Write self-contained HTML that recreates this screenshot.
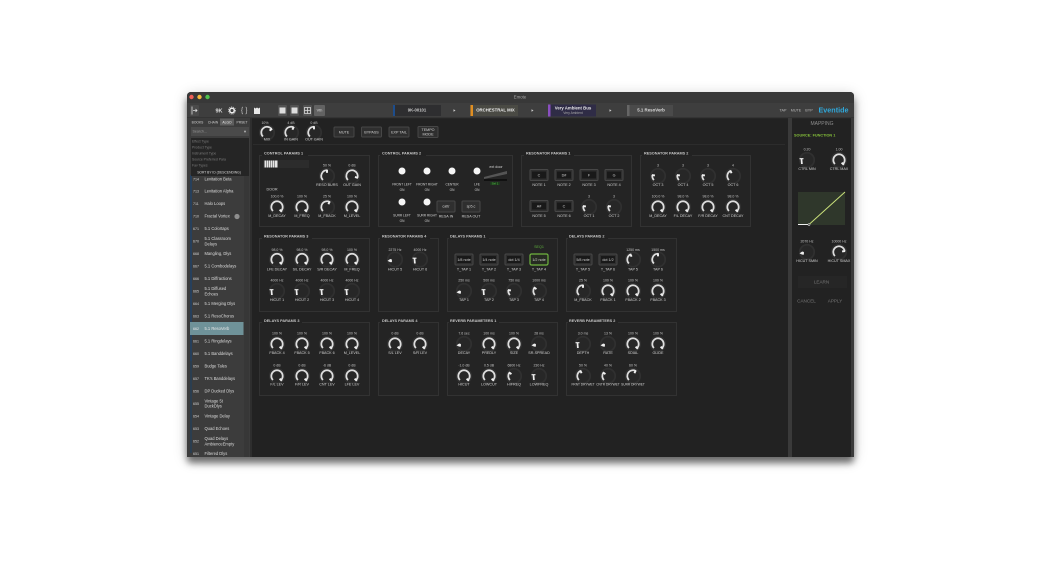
<!DOCTYPE html>
<html><head><meta charset="utf-8"><style>
html,body{margin:0;padding:0;background:#fff;width:1044px;height:566px;overflow:hidden}
svg{display:block;position:absolute;left:0;top:0;filter:blur(.32px);font-family:"Liberation Sans",sans-serif}
#win{position:absolute;left:187px;top:92px;width:667px;height:365px;border-radius:4px;background:#222;box-shadow:0 6px 7px rgba(0,0,0,.5),0 3px 14px rgba(0,0,0,.22)}
text{font-size:3.7px;fill:#d2d2d2;text-anchor:middle}
.v{font-size:3.5px;fill:#c0c0c0}
.t{font-size:3.8px;fill:#c8c8c8;text-anchor:start;font-weight:bold}
.s{text-anchor:start;font-size:4.1px;fill:#dcdcdc}
.n{text-anchor:start;font-size:3.6px;fill:#d2d2d2}
.p{fill:#242424;stroke:#323232;stroke-width:1}
.b{fill:#2f2f2f;stroke:#474747;stroke-width:1}
.d{fill:#191919}
.a{fill:none;stroke:#dedede;stroke-width:2}
.m{stroke:#f0f0f0;stroke-width:2.2}
.x{font-size:3.2px}
</style></head><body>
<div id="win"></div>
<svg width="1044" height="566" viewBox="0 0 1044 566" xmlns="http://www.w3.org/2000/svg">
<defs>
<circle id="bg" r="8.2" fill="#272727" stroke="#303030" stroke-width="2"/>
<g id="f0" transform="scale(.88)"><use href="#bg"/><path d="M-8.500 1.500L-5.500 -.5L-3.500 0V3L-5.500 3z" fill="#eee"/></g>
<g id="f1" transform="scale(.88)"><use href="#bg"/><path d="M-8.500 -2.200H-4V-.9H-5.300L-4.800 4.500H-6.800L-7.200 -.9H-8.500z" fill="#eee"/></g>
<g id="f2" transform="scale(.88)"><use href="#bg"/><path class="a" d="M-4.600 4.600A6.500 6.500 0 0 1 -6.420 -1.020"/><line class="m" x1="-3.500" y1="-.6" x2="-7" y2="-1.100"/></g>
<g id="f3" transform="scale(.88)"><use href="#bg"/><path class="a" d="M-4.600 4.600A6.500 6.500 0 0 1 -5.260 -3.820"/><line class="m" x1="-2.900" y1="-2.100" x2="-5.800" y2="-4.200"/></g>
<g id="f4" transform="scale(.88)"><use href="#bg"/><path class="a" d="M-4.600 4.600A6.500 6.500 0 0 1 -2.950 -5.790"/><line class="m" x1="-1.600" y1="-3.200" x2="-3.200" y2="-6.400"/></g>
<g id="f5" transform="scale(.88)"><use href="#bg"/><path class="a" d="M-4.600 4.600A6.500 6.500 0 0 1 0 -6.500"/><line class="m" x1="0" y1="-3.600" x2="0" y2="-7.200"/></g>
<g id="f6" transform="scale(.88)"><use href="#bg"/><path class="a" d="M-4.600 4.600A6.500 6.500 0 0 1 2.950 -5.790"/><line class="m" x1="1.600" y1="-3.200" x2="3.200" y2="-6.400"/></g>
<g id="f7" transform="scale(.88)"><use href="#bg"/><path class="a" d="M-4.600 4.600A6.500 6.500 0 1 1 5.260 -3.820"/><line class="m" x1="2.900" y1="-2.100" x2="5.800" y2="-4.200"/></g>
<g id="f8" transform="scale(.88)"><use href="#bg"/><path class="a" d="M-4.600 4.600A6.500 6.500 0 1 1 6.420 -1.020"/><line class="m" x1="3.500" y1="-.6" x2="7" y2="-1.100"/></g>
<g id="f9" transform="scale(.88)"><use href="#bg"/><path class="a" d="M-4.600 4.600A6.500 6.500 0 1 1 6.180 2.010"/><line class="m" x1="3.400" y1="1.100" x2="6.800" y2="2.200"/></g>
<g id="fa" transform="scale(.88)"><use href="#bg"/><path class="a" d="M-4.600 4.600A6.500 6.500 0 1 1 4.600 4.600"/><line class="m" x1="3" y1="3" x2="5.500" y2="5.500"/></g>
</defs>

<!-- window chrome -->
<rect x="187" y="92" width="667" height="11" rx="4" fill="#383838"/>
<rect x="187" y="98" width="667" height="5" fill="#383838"/>
<rect x="187" y="103" width="667" height="15" fill="#3e3e3e"/>
<rect x="187" y="117.500" width="667" height="1" fill="#2a2a2a"/>
<circle cx="191.500" cy="97" r="2.200" fill="#ee5f57"/><circle cx="199.500" cy="97" r="2.200" fill="#f5b93c"/><circle cx="207.500" cy="97" r="2.200" fill="#4fc24c"/>
<text x="520" y="98.500" style="font-size:4.400px;fill:#a8a8a8">Emote</text>

<!-- toolbar icons -->
<rect x="190" y="105" width="9" height="11" rx="1" fill="#4a4a4a"/>
<path d="M192 106.500v8M193 110.500h4M195.500 109l1.500 1.500-1.500 1.500" stroke="#ddd" stroke-width=".8" fill="none"/>
<text x="219" y="112.500" style="font-size:5.500px;font-weight:bold;fill:#ddd">9K</text>
<circle cx="232" cy="110.500" r="2.300" fill="none" stroke="#eee" stroke-width="1.500"/><circle cx="232" cy="110.500" r="3.600" fill="none" stroke="#ddd" stroke-width=".8" stroke-dasharray="1 1"/>
<path d="M243 107c-1 0-1 .6-1 1.500v1c0 .6-.3 1-.7 1 .4 0 .7.4.7 1v1c0 .9 0 1.500 1 1.500M245.500 107c1 0 1 .6 1 1.500v1c0 .6.3 1 .7 1-.4 0-.7.4-.7 1v1c0 .9 0 1.500-1 1.500" fill="none" stroke="#ccc" stroke-width=".6"/>
<path d="M254 107.500l1.500 1 1.500-1 1.500 1 1.500-1v6.500h-6z" fill="#e8e8e8"/>
<rect x="278" y="105" width="9" height="11" rx="1" fill="#525252"/><rect x="279.500" y="107.500" width="6" height="6" fill="#ddd"/>
<rect x="290" y="105" width="9" height="11" rx="1" fill="#525252"/><rect x="291.500" y="107.500" width="6" height="6" fill="#ddd"/>
<rect x="303" y="105" width="9" height="11" rx="1" fill="#525252"/><path d="M304.500 107.500h6v6h-6zM307.500 107.500v6M304.500 110.500h6" fill="none" stroke="#ddd" stroke-width=".8"/>
<rect x="314" y="105" width="11" height="11" rx="1" fill="#626262"/><text x="319.500" y="111.500" style="font-size:3.800px;fill:#ddd">Vth</text>

<!-- preset slots -->
<rect x="393" y="105" width="48" height="11" fill="#2e2e30"/><rect x="393" y="105" width="2" height="11" fill="#1d4d8c"/>
<text x="417" y="111.700" style="font-size:4.200px;font-weight:bold;fill:#ccc">9K-00101</text>
<path d="M453.500 109.300l2 1.200-2 1.200z" fill="#ccc"/>
<rect x="470" y="105" width="48" height="11" fill="#4a4a44"/><rect x="470.500" y="105" width="2.500" height="11" fill="#e08e22"/>
<text x="495.500" y="111.700" style="font-size:4.300px;font-weight:bold;fill:#efefef">ORCHESTRAL MIX</text>
<path d="M531.500 109.300l2 1.200-2 1.200z" fill="#ccc"/>
<rect x="548" y="104.500" width="48" height="12" fill="#2f2c46"/><rect x="548" y="104.500" width="2.500" height="12" fill="#8a4fc0"/>
<text x="573" y="109.700" style="font-size:4.300px;font-weight:bold;fill:#e8e8e8">Very Ambient Bus</text>
<text x="573" y="114.200" style="font-size:3.300px;fill:#aaa">Very Ambient</text>
<path d="M609.500 109.300l2 1.200-2 1.200z" fill="#ccc"/>
<rect x="627" y="105" width="46" height="11" fill="#4a4a4a"/><rect x="627" y="105" width="2.500" height="11" fill="#666"/>
<text x="651" y="111.700" style="font-size:4.400px;font-weight:bold;fill:#ddd">5.1 ResoVerb</text>
<text x="783" y="111.500" style="font-size:3.700px;fill:#bbb">TAP</text><text x="796" y="111.500" style="font-size:3.700px;fill:#bbb">MUTE</text><text x="809" y="111.500" style="font-size:3.700px;fill:#bbb">BYP</text>
<text x="833.500" y="112.500" style="font-size:7.200px;font-weight:bold;fill:#2fa9dc">Eventide</text>

<!-- sidebar -->
<rect x="187" y="118" width="64" height="339" fill="#3c3c3c"/>
<rect x="190" y="175" width="2" height="186" fill="#27405c"/>
<rect x="190" y="361" width="2" height="92" fill="#2b3e50"/>
<rect x="244" y="176" width="5" height="281" fill="#373737"/>
<rect x="250" y="118" width="2" height="339" fill="#2e2e2e"/>
<rect x="220" y="118.500" width="14" height="7" fill="#5e5e5e"/>
<text x="197.500" y="123.500" style="font-size:3.300px">BOOKS</text><text x="213" y="123.500" style="font-size:3.300px">CHAIN</text><text x="227" y="123.500" style="font-size:3.300px;fill:#eee">ALGO</text><text x="242" y="123.500" style="font-size:3.300px">PRSET</text>
<rect x="191" y="127" width="58" height="9" fill="#4a4a4a"/>
<text class="n" x="192.500" y="132.700" style="fill:#999">Search...</text>
<circle cx="245" cy="131.500" r="1" fill="#aaa"/>
<rect x="191" y="138" width="58" height="38" fill="#252525"/>
<text class="n" x="192" y="142.500" style="fill:#7c7c7c;font-size:3.400px">Effect Type</text>
<text class="n" x="192" y="148.500" style="fill:#7c7c7c;font-size:3.400px">Product Type</text>
<text class="n" x="192" y="154.500" style="fill:#7c7c7c;font-size:3.400px">Instrument Type</text>
<text class="n" x="192" y="160.500" style="fill:#7c7c7c;font-size:3.400px">Source Preferred Para</text>
<text class="n" x="192" y="166.500" style="fill:#7c7c7c;font-size:3.400px">Fav Types</text>
<text x="219" y="173.500" style="font-size:3.300px;fill:#ddd">SORT BY ID (DESCENDING)</text>
<rect x="190" y="322" width="53.500" height="13" fill="#6f9299"/>

<text class="n" x="193" y="180.500">714</text><text class="s" x="204.500" y="180.500">Levitation Beta</text>
<text class="n" x="193" y="192.500">713</text><text class="s" x="204.500" y="192.500">Levitation Alpha</text>
<text class="n" x="193" y="205">711</text><text class="s" x="204.500" y="205">Halo Loops</text>
<text class="n" x="193" y="217.500">710</text><text class="s" x="204.500" y="217.500">Fractal Vortex</text>
<circle cx="237" cy="216.500" r="2.600" fill="#8e8e8e"/>
<text class="n" x="193" y="230">671</text><text class="s" x="204.500" y="230">5.1 Colortaps</text>
<text class="n" x="193" y="242.500">670</text><text class="s" x="204.500" y="240">5.1 Classroom</text><text class="s" x="204.500" y="245.500">Delays</text>
<text class="n" x="193" y="255">668</text><text class="s" x="204.500" y="255">Mangling, Dlys</text>
<text class="n" x="193" y="267.500">667</text><text class="s" x="204.500" y="267.500">5.1 Combodelays</text>
<text class="n" x="193" y="280">666</text><text class="s" x="204.500" y="280">5.1 Diffractions</text>
<text class="n" x="193" y="292.500">665</text><text class="s" x="204.500" y="290">5.1 Diffused</text><text class="s" x="204.500" y="295.500">Echoes</text>
<text class="n" x="193" y="305">664</text><text class="s" x="204.500" y="305">5.1 Merging Dlys</text>
<text class="n" x="193" y="317.500">663</text><text class="s" x="204.500" y="317.500">5.1 ResoChorus</text>
<text class="n" x="193" y="330" style="fill:#e8e8e8">662</text><text class="s" x="204.500" y="330" style="fill:#e8e8e8">5.1 ResoVerb</text>
<text class="n" x="193" y="342.500">661</text><text class="s" x="204.500" y="342.500">5.1 Ringdelays</text>
<text class="n" x="193" y="355">660</text><text class="s" x="204.500" y="355">5.1 Banddelays</text>
<text class="n" x="193" y="367.500">659</text><text class="s" x="204.500" y="367.500">Budge Tales</text>
<text class="n" x="193" y="380">657</text><text class="s" x="204.500" y="380">TK's Banddelays</text>
<text class="n" x="193" y="392.500">656</text><text class="s" x="204.500" y="392.500">DP Ducked Dlys</text>
<text class="n" x="193" y="405">655</text><text class="s" x="204.500" y="402.500">Vintage 5t</text><text class="s" x="204.500" y="407.500">DuckDlys</text>
<text class="n" x="193" y="417.500">654</text><text class="s" x="204.500" y="417.500">Vintage Delay</text>
<text class="n" x="193" y="430">653</text><text class="s" x="204.500" y="430">Quad Echoes</text>
<text class="n" x="193" y="442.500">652</text><text class="s" x="204.500" y="440">Quad Delays</text><text class="s" x="204.500" y="445.500">AmbienceEmpty</text>
<text class="n" x="193" y="455">651</text><text class="s" x="204.500" y="455">Filtered Dlys</text>

<!-- dividers -->
<rect x="788" y="118" width="4" height="339" fill="#3a3a3a"/>
<rect x="851" y="118" width="3" height="339" fill="#3a3a3a"/>
<line x1="253" y1="144.500" x2="785" y2="144.500" stroke="#2c2c2c" stroke-width="1"/>

<!-- top controls -->
<use href="#f7" x="267" y="132.500"/><text class="v" x="265" y="124">10%</text><text x="267" y="140.500">MIX</text>
<use href="#f6" x="291" y="132.500"/><text class="v" x="291" y="124">4 dB</text><text x="291" y="140.500">IN GAIN</text>
<use href="#f5" x="314" y="132.500"/><text class="v" x="314" y="124">0 dB</text><text x="314" y="140.500">OUT GAIN</text>
<rect class="b" x="334" y="127" width="20" height="10" rx="1"/><text x="344" y="133.500">MUTE</text>
<rect class="b" x="361.500" y="127" width="20" height="10" rx="1"/><text x="371.500" y="133.500">BYPASS</text>
<rect class="b" x="389" y="127" width="20" height="10" rx="1"/><text x="399" y="133.500">EXP TAIL</text>
<rect class="b" x="418" y="126.500" width="20" height="11" rx="1"/><text x="428" y="131">TEMPO</text><text x="428" y="135.500">MODE</text>

<!-- panels -->
<rect class="p" x="259.500" y="155.500" width="110" height="71"/>
<rect class="p" x="378.500" y="155.500" width="134" height="71"/>
<rect class="p" x="521.500" y="155.500" width="110" height="71"/>
<rect class="p" x="640.500" y="155.500" width="110" height="71"/>
<rect class="p" x="259.500" y="238.500" width="110" height="73"/>
<rect class="p" x="378.500" y="238.500" width="60" height="73"/>
<rect class="p" x="447.500" y="238.500" width="110" height="73"/>
<rect class="p" x="566.500" y="238.500" width="110" height="73"/>
<rect class="p" x="259.500" y="322.500" width="110" height="73"/>
<rect class="p" x="378.500" y="322.500" width="60" height="73"/>
<rect class="p" x="447.500" y="322.500" width="110" height="73"/>
<rect class="p" x="566.500" y="322.500" width="110" height="73"/>

<rect x="262" y="152" width="46" height="4" fill="#222"/><text class="t" x="264" y="154.500">CONTROL PARAMS 1</text>
<rect x="380" y="152" width="46" height="4" fill="#222"/><text class="t" x="382" y="154.500">CONTROL PARAMS 2</text>
<rect x="524" y="152" width="50" height="4" fill="#222"/><text class="t" x="526" y="154.500">RESONATOR PARAMS 1</text>
<rect x="642" y="152" width="50" height="4" fill="#222"/><text class="t" x="644" y="154.500">RESONATOR PARAMS 2</text>
<rect x="262" y="235" width="50" height="4" fill="#222"/><text class="t" x="264" y="237.500">RESONATOR PARAMS 3</text>
<rect x="380" y="235" width="50" height="4" fill="#222"/><text class="t" x="382" y="237.500">RESONATOR PARAMS 4</text>
<rect x="449" y="235" width="40" height="4" fill="#222"/><text class="t" x="450" y="237.500">DELAYS PARAMS 1</text>
<rect x="568" y="235" width="40" height="4" fill="#222"/><text class="t" x="569" y="237.500">DELAYS PARAMS 2</text>
<rect x="262" y="319" width="40" height="4" fill="#222"/><text class="t" x="264" y="322">DELAYS PARAMS 3</text>
<rect x="380" y="319" width="40" height="4" fill="#222"/><text class="t" x="382" y="322">DELAYS PARAMS 4</text>
<rect x="449" y="319" width="50" height="4" fill="#222"/><text class="t" x="450" y="322">REVERB PARAMETERS 1</text>
<rect x="568" y="319" width="50" height="4" fill="#222"/><text class="t" x="569" y="322">REVERB PARAMETERS 2</text>

<!-- control params 1 -->
<rect x="263" y="160" width="46" height="8" fill="#2c2c2c"/>
<path d="M264.500 160.500h13v7h-13z" fill="#e6e6e6"/><path d="M266.500 160.500v7M268.500 160.500v7M270.500 160.500v7M272.500 160.500v7M274.500 160.500v7" stroke="#555" stroke-width=".6"/>
<text x="272" y="190.500">DOOR</text>
<use href="#f5" x="327" y="176"/><text class="v" x="327" y="166.500">50 %</text><text x="327" y="186">RESO BURS</text>
<use href="#f9" x="352" y="176"/><text class="v" x="352" y="166.500">0 dB</text><text x="352" y="186">OUT GAIN</text>
<use href="#fa" x="277" y="207"/><text class="v" x="277" y="197.500">100.0 %</text><text x="277" y="217">M_DECAY</text>
<use href="#fa" x="302" y="207"/><text class="v" x="302" y="197.500">100 %</text><text x="302" y="217">M_FREQ</text>
<use href="#f6" x="327" y="207"/><text class="v" x="327" y="197.500">25 %</text><text x="327" y="217">M_FBACK</text>
<use href="#fa" x="352" y="207"/><text class="v" x="352" y="197.500">100 %</text><text x="352" y="217">M_LEVEL</text>

<!-- control params 2 -->
<circle cx="402" cy="171" r="3.500" fill="#f5f5f5"/><circle cx="427" cy="171" r="3.500" fill="#f5f5f5"/><circle cx="452" cy="171" r="3.500" fill="#f5f5f5"/><circle cx="477" cy="171" r="3.500" fill="#f5f5f5"/>
<text class="x" x="402" y="185.500">FRONT LEFT</text><text class="x" x="402" y="191">ON</text>
<text class="x" x="427" y="185.500">FRONT RIGHT</text><text class="x" x="427" y="191">ON</text>
<text class="x" x="452" y="185.500">CENTER</text><text class="x" x="452" y="191">ON</text>
<text class="x" x="477" y="185.500">LFE</text><text class="x" x="477" y="191">ON</text>
<circle cx="402" cy="202" r="3.500" fill="#f5f5f5"/><circle cx="427" cy="202" r="3.500" fill="#f5f5f5"/>
<text class="x" x="402" y="216.500">SURR LEFT</text><text class="x" x="402" y="222">ON</text>
<text class="x" x="427" y="216.500">SURR RIGHT</text><text class="x" x="427" y="222">ON</text>
<rect class="b" x="437" y="201" width="18" height="11" rx="1"/><text x="446" y="207.500">cattr</text><text x="446" y="217.500">RESA IN</text>
<rect class="b" x="462" y="201" width="18" height="11" rx="1"/><text x="471" y="207.500">sp5.c</text><text x="471" y="217.500">RESA OUT</text>
<text x="496" y="168">ext door</text>
<path d="M484 177 L507 171 L507 174 L484 179z" fill="#555"/><rect x="484" y="179" width="23" height="2" fill="#111"/>
<rect x="490" y="182" width="10" height="3" fill="#1c3a1c"/><text x="495" y="184.500" style="fill:#5cc24a;font-size:3px">Sel 1</text>

<!-- resonator 1 -->
<rect class="b" x="530" y="169.500" width="18" height="11" rx="1"/><rect class="d" x="532" y="171.500" width="14" height="7"/><text x="539" y="176.500">C</text><text x="539" y="186">NOTE 1</text>
<rect class="b" x="555" y="169.500" width="18" height="11" rx="1"/><rect class="d" x="557" y="171.500" width="14" height="7"/><text x="564" y="176.500">D#</text><text x="564" y="186">NOTE 2</text>
<rect class="b" x="580" y="169.500" width="18" height="11" rx="1"/><rect class="d" x="582" y="171.500" width="14" height="7"/><text x="589" y="176.500">F</text><text x="589" y="186">NOTE 3</text>
<rect class="b" x="605" y="169.500" width="18" height="11" rx="1"/><rect class="d" x="607" y="171.500" width="14" height="7"/><text x="614" y="176.500">G</text><text x="614" y="186">NOTE 4</text>
<rect class="b" x="530" y="200.500" width="18" height="11" rx="1"/><rect class="d" x="532" y="202.500" width="14" height="7"/><text x="539" y="207.500">A#</text><text x="539" y="217">NOTE 5</text>
<rect class="b" x="555" y="200.500" width="18" height="11" rx="1"/><rect class="d" x="557" y="202.500" width="14" height="7"/><text x="564" y="207.500">C</text><text x="564" y="217">NOTE 6</text>
<use href="#f2" x="589" y="207"/><text class="v" x="589" y="197.500">3</text><text x="589" y="217">OCT 1</text>
<use href="#f2" x="614" y="207"/><text class="v" x="614" y="197.500">3</text><text x="614" y="217">OCT 2</text>

<!-- resonator 2 -->
<use href="#f2" x="658" y="176"/><text class="v" x="658" y="166.500">3</text><text x="658" y="186">OCT 3</text>
<use href="#f2" x="683" y="176"/><text class="v" x="683" y="166.500">3</text><text x="683" y="186">OCT 4</text>
<use href="#f2" x="708" y="176"/><text class="v" x="708" y="166.500">3</text><text x="708" y="186">OCT 5</text>
<use href="#f4" x="733" y="176"/><text class="v" x="733" y="166.500">4</text><text x="733" y="186">OCT 6</text>
<use href="#fa" x="658" y="207"/><text class="v" x="658" y="197.500">100.0 %</text><text x="658" y="217">M_DECAY</text>
<use href="#fa" x="683" y="207"/><text class="v" x="683" y="197.500">98.0 %</text><text x="683" y="217">F/L DECAY</text>
<use href="#fa" x="708" y="207"/><text class="v" x="708" y="197.500">98.0 %</text><text x="708" y="217">F/R DECAY</text>
<use href="#fa" x="733" y="207"/><text class="v" x="733" y="197.500">98.0 %</text><text x="733" y="217">CNT DECAY</text>

<!-- resonator 3 -->
<use href="#fa" x="277" y="259.500"/><text class="v" x="277" y="251">98.0 %</text><text x="277" y="270.300">LFE DECAY</text>
<use href="#fa" x="302" y="259.500"/><text class="v" x="302" y="251">98.0 %</text><text x="302" y="270.300">S/L DECAY</text>
<use href="#fa" x="327" y="259.500"/><text class="v" x="327" y="251">98.0 %</text><text x="327" y="270.300">S/R DECAY</text>
<use href="#fa" x="352" y="259.500"/><text class="v" x="352" y="251">100 %</text><text x="352" y="270.300">M_FREQ</text>
<use href="#f1" x="277" y="291"/><text class="v" x="277" y="281.500">4000 Hz</text><text x="277" y="301">HICUT 1</text>
<use href="#f1" x="302" y="291"/><text class="v" x="302" y="281.500">4000 Hz</text><text x="302" y="301">HICUT 2</text>
<use href="#f1" x="327" y="291"/><text class="v" x="327" y="281.500">4000 Hz</text><text x="327" y="301">HICUT 3</text>
<use href="#f1" x="352" y="291"/><text class="v" x="352" y="281.500">4000 Hz</text><text x="352" y="301">HICUT 4</text>

<!-- resonator 4 -->
<use href="#f0" x="395" y="259.500"/><text class="v" x="395" y="251">2275 Hz</text><text x="395" y="270.300">HICUT 5</text>
<use href="#f1" x="420" y="259.500"/><text class="v" x="420" y="251">4000 Hz</text><text x="420" y="270.300">HICUT 6</text>

<!-- delays 1 -->
<rect class="b" x="455" y="254" width="18" height="11" rx="1"/><rect class="d" x="457" y="256" width="14" height="7"/><text x="464" y="261">1/8 note</text><text x="464" y="270.300">T_TAP 1</text>
<rect class="b" x="480" y="254" width="18" height="11" rx="1"/><rect class="d" x="482" y="256" width="14" height="7"/><text x="489" y="261">1/4 note</text><text x="489" y="270.300">T_TAP 2</text>
<rect class="b" x="505" y="254" width="18" height="11" rx="1"/><rect class="d" x="507" y="256" width="14" height="7"/><text x="514" y="261">dot 1/4</text><text x="514" y="270.300">T_TAP 3</text>
<rect x="530" y="254" width="18" height="11" rx="1.500" stroke="#6fb33f" stroke-width="1.200" style="fill:#262b22"/><text x="539" y="261">1/2 note</text><text x="539" y="270.300">T_TAP 4</text>
<text x="539" y="248" style="fill:#5cae3c">SEQ1</text>
<use href="#f0" x="464" y="291"/><text class="v" x="464" y="281.500">250 ms</text><text x="464" y="301">TAP 1</text>
<use href="#f1" x="489" y="291"/><text class="v" x="489" y="281.500">500 ms</text><text x="489" y="301">TAP 2</text>
<use href="#f2" x="514" y="291"/><text class="v" x="514" y="281.500">750 ms</text><text x="514" y="301">TAP 3</text>
<use href="#f3" x="539" y="291"/><text class="v" x="539" y="281.500">1000 ms</text><text x="539" y="301">TAP 4</text>

<!-- delays 2 -->
<rect class="b" x="574" y="254" width="18" height="11" rx="1"/><rect class="d" x="576" y="256" width="14" height="7"/><text x="583" y="261">5/8 note</text><text x="583" y="270.300">T_TAP 5</text>
<rect class="b" x="599" y="254" width="18" height="11" rx="1"/><rect class="d" x="601" y="256" width="14" height="7"/><text x="608" y="261">dot 1/2</text><text x="608" y="270.300">T_TAP 6</text>
<use href="#f4" x="633" y="259.500"/><text class="v" x="633" y="251">1250 ms</text><text x="633" y="270.300">TAP 5</text>
<use href="#f5" x="658" y="259.500"/><text class="v" x="658" y="251">1500 ms</text><text x="658" y="270.300">TAP 6</text>
<use href="#f5" x="583" y="291"/><text class="v" x="583" y="281.500">25 %</text><text x="583" y="301">M_FBACK</text>
<use href="#fa" x="608" y="291"/><text class="v" x="608" y="281.500">100 %</text><text x="608" y="301">FBACK 1</text>
<use href="#fa" x="633" y="291"/><text class="v" x="633" y="281.500">100 %</text><text x="633" y="301">FBACK 2</text>
<use href="#fa" x="658" y="291"/><text class="v" x="658" y="281.500">100 %</text><text x="658" y="301">FBACK 3</text>

<!-- delays 3 -->
<use href="#fa" x="277" y="344"/><text class="v" x="277" y="334.500">100 %</text><text x="277" y="354">FBACK 4</text>
<use href="#fa" x="302" y="344"/><text class="v" x="302" y="334.500">100 %</text><text x="302" y="354">FBACK 5</text>
<use href="#fa" x="327" y="344"/><text class="v" x="327" y="334.500">100 %</text><text x="327" y="354">FBACK 6</text>
<use href="#fa" x="352" y="344"/><text class="v" x="352" y="334.500">100 %</text><text x="352" y="354">M_LEVEL</text>
<use href="#fa" x="277" y="376"/><text class="v" x="277" y="366.500">0 dB</text><text x="277" y="385.500">F/L LEV</text>
<use href="#fa" x="302" y="376"/><text class="v" x="302" y="366.500">0 dB</text><text x="302" y="385.500">F/R LEV</text>
<use href="#fa" x="327" y="376"/><text class="v" x="327" y="366.500">-6 dB</text><text x="327" y="385.500">CNT LEV</text>
<use href="#fa" x="352" y="376"/><text class="v" x="352" y="366.500">0 dB</text><text x="352" y="385.500">LFE LEV</text>

<!-- delays 4 -->
<use href="#fa" x="395" y="344"/><text class="v" x="395" y="334.500">0 dB</text><text x="395" y="354">S/L LEV</text>
<use href="#fa" x="420" y="344"/><text class="v" x="420" y="334.500">0 dB</text><text x="420" y="354">S/R LEV</text>

<!-- reverb 1 -->
<use href="#f0" x="464" y="344"/><text class="v" x="464" y="334.500">7.6 sec</text><text x="464" y="354">DECAY</text>
<use href="#fa" x="489" y="344"/><text class="v" x="489" y="334.500">100 ms</text><text x="489" y="354">PREDLY</text>
<use href="#fa" x="514" y="344"/><text class="v" x="514" y="334.500">100 %</text><text x="514" y="354">SIZE</text>
<use href="#f0" x="539" y="344"/><text class="v" x="539" y="334.500">28 ms</text><text x="539" y="354">SR-SPREAD</text>
<use href="#fa" x="464" y="376"/><text class="v" x="464" y="366.500">-1.0 dB</text><text x="464" y="385.500">HICUT</text>
<use href="#fa" x="489" y="376"/><text class="v" x="489" y="366.500">0.5 dB</text><text x="489" y="385.500">LOWCUT</text>
<use href="#f3" x="514" y="376"/><text class="v" x="514" y="366.500">6800 Hz</text><text x="514" y="385.500">HIFREQ</text>
<use href="#f1" x="539" y="376"/><text class="v" x="539" y="366.500">230 Hz</text><text x="539" y="385.500">LOWFREQ</text>

<!-- reverb 2 -->
<use href="#f1" x="583" y="344"/><text class="v" x="583" y="334.500">3.0 ms</text><text x="583" y="354">DEPTH</text>
<use href="#f0" x="608" y="344"/><text class="v" x="608" y="334.500">13 %</text><text x="608" y="354">RATE</text>
<use href="#fa" x="633" y="344"/><text class="v" x="633" y="334.500">100 %</text><text x="633" y="354">SDIAL</text>
<use href="#fa" x="658" y="344"/><text class="v" x="658" y="334.500">100 %</text><text x="658" y="354">GLIDE</text>
<use href="#f4" x="583" y="376"/><text class="v" x="583" y="366.500">50 %</text><text class="x" x="583" y="385.500">FRNT DRYWET</text>
<use href="#f3" x="608" y="376"/><text class="v" x="608" y="366.500">40 %</text><text class="x" x="608" y="385.500">CNTR DRYWET</text>
<use href="#f6" x="633" y="376"/><text class="v" x="633" y="366.500">60 %</text><text class="x" x="633" y="385.500">SURR DRYWET</text>

<!-- right panel -->
<text x="822" y="125" style="font-size:5px;fill:#8c8c8c">MAPPING</text>
<text x="794" y="136.500" style="text-anchor:start;font-size:3.800px;fill:#86c23a;font-weight:bold">SOURCE: FUNCTION 1</text>
<use href="#f1" x="807" y="160"/><text class="v" x="807" y="150.500">0.20</text><text x="807" y="170">CTRL MIN</text>
<use href="#fa" x="839" y="160"/><text class="v" x="839" y="150.500">1.00</text><text x="839" y="170">CTRL MAX</text>
<rect x="798" y="192" width="47" height="33" fill="#2f372b"/>
<path d="M798 224.500h11" stroke="#eee" stroke-width="1"/>
<path d="M809 224.500L845 192" stroke="#c9e07a" stroke-width="1"/>
<circle cx="809" cy="224.500" r="1" fill="#222" stroke="#ddd" stroke-width=".6"/>
<use href="#f0" x="807" y="252"/><text class="v" x="807" y="242.500">2070 Hz</text><text x="807" y="262">HICUT SMIN</text>
<use href="#f8" x="839" y="252"/><text class="v" x="839" y="242.500">10000 Hz</text><text x="839" y="262">HICUT SMAX</text>
<rect x="798" y="276" width="49" height="12" fill="#262626"/>
<text x="821.500" y="283.500" style="font-size:4.600px;fill:#777">LEARN</text>
<text x="806.500" y="302.500" style="font-size:4.600px;fill:#777">CANCEL</text>
<text x="835" y="302.500" style="font-size:4.600px;fill:#777">APPLY</text>
</svg>
</body></html>
